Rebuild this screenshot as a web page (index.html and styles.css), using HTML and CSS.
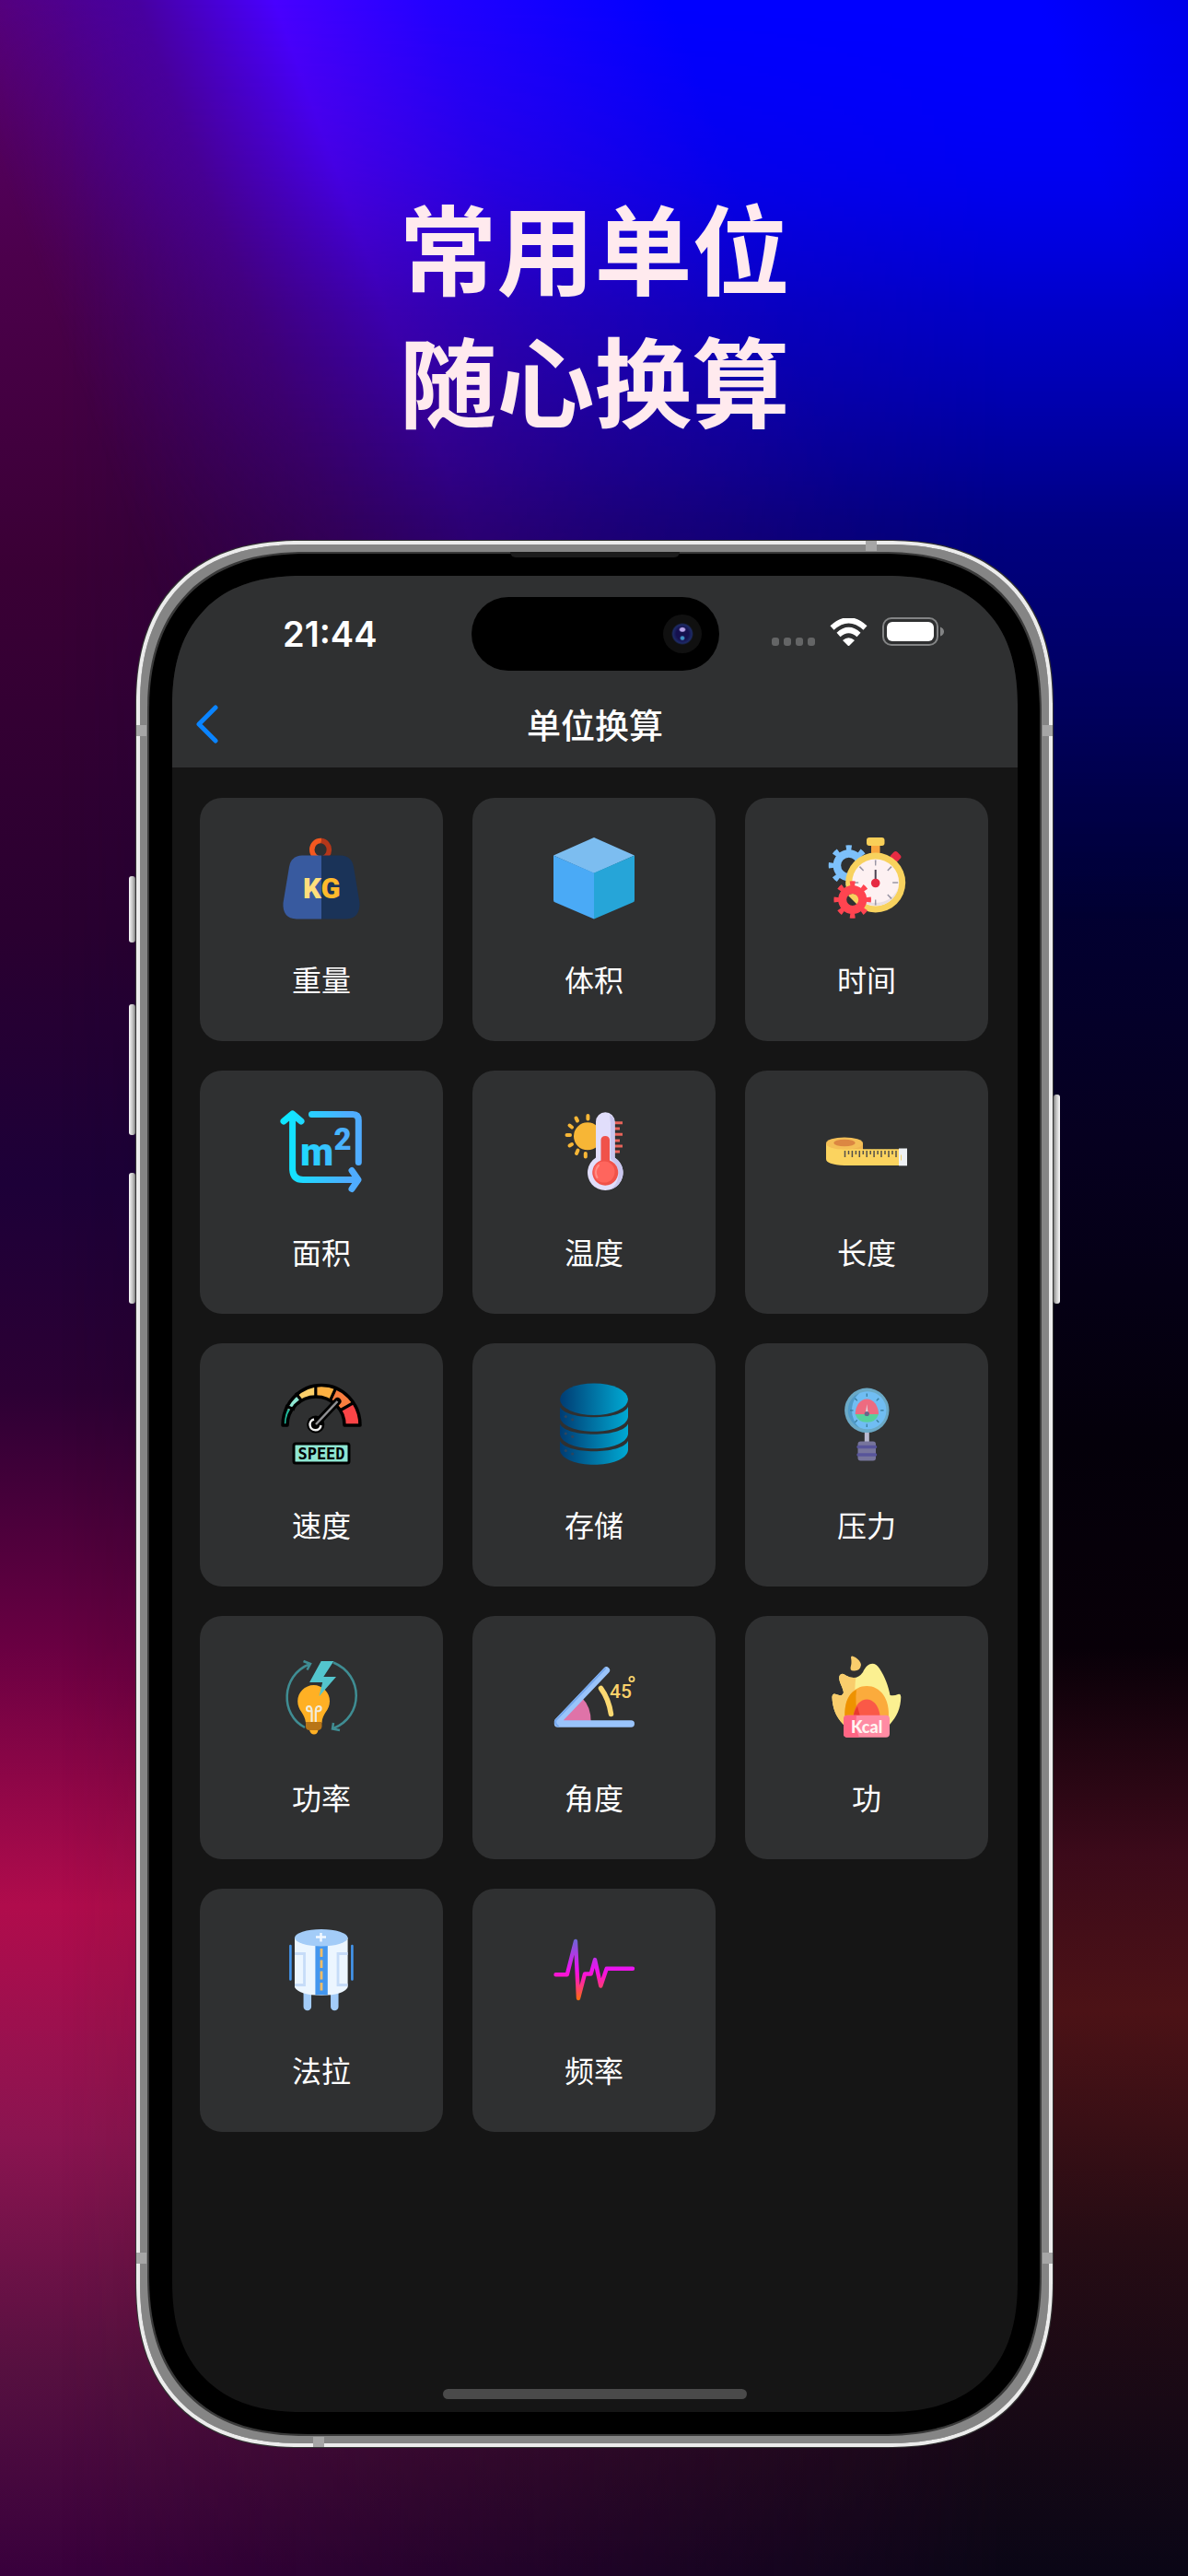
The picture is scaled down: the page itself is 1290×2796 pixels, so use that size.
FILE: index.html
```html
<!DOCTYPE html>
<html lang="zh-CN">
<head>
<meta charset="utf-8">
<meta name="viewport" content="width=device-width, initial-scale=1">
<title>单位换算</title>
<link rel="stylesheet" href="styles.css">
</head>
<body>
<main class="poster">
  <h1 class="headline">常用单位<br>随心换算</h1>

  <div class="phone">
    <span class="key key-action"></span>
    <span class="key key-up"></span>
    <span class="key key-down"></span>
    <span class="key key-power"></span>
    <span class="band band-top"></span>
    <span class="band band-left"></span>
    <span class="band band-right"></span>
    <span class="band band-left-low"></span>
    <span class="band band-right-low"></span>
    <span class="band band-bottom"></span>
    <span class="speaker"></span>

    <div class="screen">
      <header class="top">
        <div class="status">
          <time class="clock">21:44</time>
          <div class="island"><span class="camera"></span></div>
          <div class="signals">
            <svg class="cell" viewBox="0 0 47 30" aria-hidden="true"><g fill="#646566"><rect x="0" y="21" width="8" height="9" rx="3"/><rect x="13" y="21" width="8" height="9" rx="3"/><rect x="26" y="21" width="8" height="9" rx="3"/><rect x="39" y="21" width="8" height="9" rx="3"/></g></svg>
            <svg class="wifi" viewBox="0 0 41 30" aria-hidden="true"><path d="M2.500 10.500Q20.500-6 38.500 10.500" fill="none" stroke="#fff" stroke-width="6"/><path d="M9.500 18Q20.500 8 31.500 18" fill="none" stroke="#fff" stroke-width="6"/><path d="M14 24Q20.500 18.500 27 24L20.500 30.500Z" fill="#fff"/></svg>
            <svg class="battery" viewBox="0 0 68 32" aria-hidden="true"><rect x="1" y="1" width="59" height="29" rx="9" fill="none" stroke="#838485" stroke-width="2"/><rect x="5" y="5" width="51" height="21" rx="6" fill="#fff"/><path d="M63 10.500q4 1.500 4 5t-4 5z" fill="#838485"/></svg>
          </div>
        </div>
        <nav class="nav">
          <button class="back" type="button" aria-label="返回"><svg viewBox="0 0 24 42" aria-hidden="true"><path d="M21 3L3 21L21 39" fill="none" stroke="#0a84ff" stroke-width="5" stroke-linecap="round" stroke-linejoin="round"/></svg></button>
          <h2 class="title">单位换算</h2>
        </nav>
      </header>

      <div class="grid">
        <a class="card" href="#weight">
          <svg class="icon" viewBox="0 0 88 88" aria-hidden="true">
            <path d="M44 3.500A9.300 9.800 0 1 0 44 23" fill="none" stroke="#f4581f" stroke-width="5.500"/>
            <path d="M44 3.500A9.300 9.800 0 0 1 44 23" fill="none" stroke="#b5371a" stroke-width="5.500"/>
            <path d="M44 19.500H23Q11 20 9 32L2.500 71Q1.500 88 17 88.500H44Z" fill="#385a9f"/>
            <path d="M44 19.500H65Q77 20 79 32L85.500 71Q86 88 71 88.500H44Z" fill="#1a3358"/>
            <text class="kg" x="34" y="66" fill="#ffdf7c">K</text><text class="kg" x="54" y="66" fill="#ffb92c">G</text>
          </svg>
          <span>重量</span>
        </a>
        <a class="card" href="#volume">
          <svg class="icon" viewBox="0 0 88 88" aria-hidden="true">
            <path d="M44 0L88 19.500L44 39L0 19.500Z" fill="#7cbdf0"/><path d="M0 19.500L44 38.500V88.500L2 70.500Q0 70 0 68Z" fill="#4aaaf6"/><path d="M88 19.500L44 38.500V88.500L86 70.500Q88 70 88 68Z" fill="#26a5d8"/>
          </svg>
          <span>体积</span>
        </a>
        <a class="card" href="#time">
          <svg class="icon" viewBox="0 0 88 88" aria-hidden="true">
            <g fill="none" stroke="#7dc0fa"><circle cx="24.700" cy="30.300" r="12.800" stroke-width="8.500"/><circle cx="24.700" cy="30.300" r="19" stroke-width="6" pathLength="16" stroke-dasharray=".8 1.2" stroke-dashoffset=".4"/></g>
            <rect x="49" y="5" width="9.500" height="14" fill="#f9a63e"/><rect x="44" y="0" width="19.500" height="9" rx="3" fill="#f8cf58"/>
            <rect x="70.500" y="16" width="10" height="10" rx="3" transform="rotate(45 75.500 21)" fill="#e62b43"/>
            <circle cx="53.700" cy="49" r="32.500" fill="#f8d25e"/><circle cx="53.700" cy="49" r="25.500" fill="#fdf1f2"/>
            <path d="M29 54A25.500 25.500 0 0 0 79 53A26 24 0 0 1 29 54Z" fill="#e8dfe3"/>
            <circle cx="53.700" cy="49" r="21.500" fill="none" stroke="#9a96a5" stroke-width="6" pathLength="136" stroke-dasharray="1.6 15.4" stroke-dashoffset=".8"/>
            <path d="M53.700 35V49" stroke="#4a4150" stroke-width="2"/><circle cx="53.700" cy="49.500" r="4.800" fill="#e62b43"/>
            <circle cx="28.700" cy="67.500" r="7" fill="#303132"/><path d="M24 63A7 7 0 1 1 34 73Z" fill="#f8d25e"/>
            <g fill="none" stroke="#ff4450"><circle cx="28.700" cy="67.500" r="11" stroke-width="9"/><circle cx="28.700" cy="67.500" r="17.500" stroke-width="5.500" pathLength="16" stroke-dasharray=".8 1.2" stroke-dashoffset=".4"/></g>
          </svg>
          <span>时间</span>
        </a>
        <a class="card" href="#area">
          <svg class="icon" viewBox="0 0 88 88" aria-hidden="true">
            <defs><linearGradient id="area-fill" gradientUnits="userSpaceOnUse" x1="8" y1="0" x2="84" y2="0"><stop stop-color="#0fe6ff"/><stop offset=".85" stop-color="#4facff"/></linearGradient></defs>
            <g fill="none" stroke="url(#area-fill)" stroke-width="7" stroke-linecap="round" stroke-linejoin="round"><path d="M3 12L12.600 4L22 12M12.600 5V64Q13 75.500 24 75.500H83M77 65.500L84 75.500L77 85.500"/><path d="M33.500 4.500H78Q84.300 4.500 84.300 11V56.500"/></g>
            <g fill="url(#area-fill)"><text class="metre" x="39" y="59.500">m</text><text class="square" x="67" y="43">2</text></g>
          </svg>
          <span>面积</span>
        </a>
        <a class="card" href="#temperature">
          <svg class="icon" viewBox="0 0 88 88" aria-hidden="true">
            <circle cx="37" cy="28.300" r="15" fill="#f7b636"/>
            <path d="M37.400 6V9.500M24.500 8.500L26 11.500M17.500 16.500L20 18.500M14.500 27H18M17.500 38.500L20 37M25 47L26.500 43.500M34.800 50.500V47" stroke="#f7b636" stroke-width="4" stroke-linecap="round"/>
            <path d="M66 13.700H75M66 20H72M66 26.300H75M66 33H72M66 39H75M66 45H72" stroke="#e8635a" stroke-width="3"/>
            <path d="M46 12.500A10.300 10.300 0 0 1 66.600 12.500V51.500A19.300 19.300 0 1 1 46 51.500Z" fill="#e1defb"/>
            <path d="M61 5Q66.600 8 66.600 14V51.500A19.300 19.300 0 0 1 61 86.500A20 20 0 0 0 62 53V14Z" fill="#c9c6ee"/>
            <path d="M51.500 32A4.800 4.800 0 0 1 61 32V54.500A14 14 0 1 1 51.500 54.500Z" fill="#f0524a"/><circle cx="55" cy="67" r="11.500" fill="#ff655d"/><path d="M47.500 73A11 11 0 0 1 49 60" fill="none" stroke="#ff9088" stroke-width="2" stroke-linecap="round"/>
          </svg>
          <span>温度</span>
        </a>
        <a class="card" href="#length">
          <svg class="icon" viewBox="0 0 88 88" aria-hidden="true">
            <path d="M0 36H40V42.200H79V60H20Q0 59 0 53Z" fill="#fbd35f"/><path d="M0 36H40V42.200H20Q3 42 0 36Z" fill="#efb552"/>
            <ellipse cx="20" cy="36" rx="20" ry="6.600" fill="#f4bf57"/><ellipse cx="20" cy="35.500" rx="11.700" ry="3.800" fill="#dc8742"/>
            <path d="M20.500 44V51M28.400 44V51M36.300 44V51M44.200 44V51M52.100 44V51M60 44V51M68 44V51M76 44V51M24.500 44V48M32.400 44V48M40.300 44V48M48.200 44V48M56.100 44V48M64 44V48M72 44V48" stroke="#54504b" stroke-width="1.500"/>
            <rect x="79" y="41.500" width="9" height="18.800" fill="#eef1f4"/><path d="M81.500 48.500V54.500" stroke="#f0d36b"/>
          </svg>
          <span>长度</span>
        </a>
        <a class="card" href="#speed">
          <svg class="icon" viewBox="0 0 88 88" aria-hidden="true">
            <defs><clipPath id="dial"><path d="M2 46A42 43.500 0 0 1 86 46H69A31 31 0 0 0 7 46Z"/></clipPath></defs>
            <g clip-path="url(#dial)"><path d="M0 0H88V46H0Z" fill="#fb4446"/><path d="M38 46V0H90V14Z" fill="#fb7e3f"/><path d="M46 46V0H61Z" fill="#fdb041"/><path d="M46 46V0H37V20Z" fill="#fdb041"/><path d="M38 46V0H8Z" fill="#fcd06a"/><path d="M38 46L14 4H0V24Z" fill="#8ee6d2"/><path d="M38 46L0 24V46Z" fill="#20b89a"/></g>
            <path d="M2 46A42 43.500 0 0 1 86 46H69A31 31 0 0 0 7 46Z" fill="none" stroke="#000" stroke-width="3.500" stroke-linejoin="round"/>
            <path d="M5 25L15 29M16 11L23 20M37.800 2V15M60 5L54 18M78 22L64 30" stroke="#000" stroke-width="3.200"/>
            <path d="M37.800 45L61.500 20" stroke="#000" stroke-width="8" stroke-linecap="round"/><circle cx="37.800" cy="45" r="9.600" fill="#000"/><path d="M36 39.500A6 6 0 1 0 43.500 46" fill="none" stroke="#eee" stroke-width="2.500"/><path d="M38 45L61.500 20" stroke="#8f8f92" stroke-width="2.500"/>
            <rect x="14" y="66" width="60" height="21" rx="2" fill="#8ee6d2" stroke="#000" stroke-width="3"/>
            <text class="speed" x="44" y="83">SPEED</text>
          </svg>
          <span>速度</span>
        </a>
        <a class="card" href="#storage">
          <svg class="icon" viewBox="0 0 88 88" aria-hidden="true">
            <defs><linearGradient id="disk-fill" gradientUnits="userSpaceOnUse" x1="7" y1="0" x2="81" y2="0"><stop stop-color="#003c73"/><stop offset="1" stop-color="#00a9d3"/></linearGradient></defs>
            <g fill="url(#disk-fill)"><ellipse cx="44" cy="17.800" rx="37" ry="17.300"/><path d="M7 26C14 41 74 41 81 26V37C78 58 10 58 7 37Z"/><path d="M7 44.500C14 59.500 74 59.500 81 44.500V55.500C78 76.500 10 76.500 7 55.500Z"/><path d="M7 63C14 78 74 78 81 63V73C78 94 10 94 7 73Z"/></g>
            <g fill="#2b4660"><circle cx="13.300" cy="36.500" r="1.600"/><circle cx="20.700" cy="39.800" r="1.600"/><circle cx="13.300" cy="55" r="1.600"/><circle cx="20.700" cy="58.300" r="1.600"/><circle cx="13.300" cy="73.500" r="1.600"/><circle cx="20.700" cy="77" r="1.600"/></g>
          </svg>
          <span>存储</span>
        </a>
        <a class="card" href="#pressure">
          <svg class="icon" viewBox="0 0 88 88" aria-hidden="true">
            <rect x="41.800" y="52" width="5" height="13" fill="#b9b9cf"/><rect x="34.500" y="63.500" width="19.500" height="21" rx="3" fill="#77759c"/><path d="M35 69.600H53.500M35 78H53.500" stroke="#58559a" stroke-width="3.500" stroke-linecap="round"/>
            <circle cx="44.300" cy="29.800" r="24.200" fill="#6ba9c6"/><circle cx="45" cy="29.800" r="20.500" fill="#70bdf3"/><path d="M36 11A20.500 20.500 0 0 0 36 48.500A26 26 0 0 1 36 11Z" fill="#519bc8"/>
            <circle cx="44.300" cy="29.800" r="16.500" fill="none" stroke="#3c7f9f" stroke-width="3.500" pathLength="104" stroke-dasharray="1.400 11.600" stroke-dashoffset=".7"/>
            <path d="M31.700 34A12.600 16.500 0 0 1 57 34Z" fill="#ed6b80"/><path d="M31.700 34H57Q54 42.800 44.300 42.800T31.700 34Z" fill="#58cf9c"/><path d="M42.800 34L44.300 23L45.800 34Z" fill="#ddd3dc"/><circle cx="44.300" cy="33.500" r="2.600" fill="#69668c"/>
          </svg>
          <span>压力</span>
        </a>
        <a class="card" href="#power">
          <svg class="icon" viewBox="0 0 88 88" aria-hidden="true">
            <path d="M30.500 9.500C0 22-1 64 26 78M57 7.500C90 21 90 66 57 79M24.500 6L32 9L28.500 15.500M57 73L56 79.500L64 81" fill="none" stroke="#3f8d93" stroke-width="2.500"/>
            <path d="M27 73C26 62 18.200 60 18.200 49.500A17.400 17.400 0 0 1 53 49.500C53 60 45 62 44.500 73Z" fill="#ffb024"/>
            <path d="M27 72H44.500V77Q44 81 40 81H31.500Q27 81 27 77Z" fill="#b87517"/><path d="M31 81H40.500Q39.500 85.500 36 85.500T31 81Z" fill="#ffb024"/>
            <path d="M33.500 72V60Q33 55 30.500 55T28 58T33.500 60M37.800 72V60Q38 55 41 55T43.500 58T37.800 60" fill="none" stroke="#f1ecdc" stroke-width="2.200"/>
            <path d="M43.700 6H57.400L46.300 23H60L41.500 44.300L45.200 29H31.100Z" fill="#53c5cd"/>
          </svg>
          <span>功率</span>
        </a>
        <a class="card" href="#angle">
          <svg class="icon" viewBox="0 0 88 88" aria-hidden="true">
            <path d="M5 71L31 46Q40.700 55 40.700 72H5Z" fill="#df73a8"/>
            <path d="M57.400 16L4.500 71.500V74H84.300" fill="none" stroke="#9ac4fb" stroke-width="7.400" stroke-linecap="round" stroke-linejoin="round"/><path d="M56 14L2.500 70Q1 74 5 76.500" fill="none" stroke="#76a8ee" stroke-width="2" stroke-linecap="round"/>
            <path d="M51.500 35.500Q60 47 62.500 63.500" fill="none" stroke="#fbd972" stroke-width="5.500" stroke-linecap="round"/>
            <text class="degrees" x="73" y="45.500">45</text><circle cx="85" cy="25.500" r="2.600" fill="none" stroke="#fbd26a" stroke-width="1.800"/>
          </svg>
          <span>角度</span>
        </a>
        <a class="card" href="#work">
          <svg class="icon" viewBox="0 0 88 88" aria-hidden="true">
            <defs><clipPath id="left-half"><path d="M0 0H38Q28 30 33 55L38 90H0Z"/></clipPath></defs>
            <path d="M19 75C10 66 7 56 6.500 45Q7 40 11 42Q18 45 19 40C18 33 13 28 14.500 22Q17 18 21.500 21.500Q33 28 40 18C45 7 53 6 58 14C64 23 68 34 69.500 43Q74 44 78 42Q81 40.500 81.300 45C81 57 77 66 69 75Z" fill="#fbf091"/>
            <g clip-path="url(#left-half)"><path d="M19 75C10 66 7 56 6.500 45Q7 40 11 42Q18 45 19 40C18 33 13 28 14.500 22Q17 18 21.500 21.500Q33 28 40 18V75Z" fill="#f9cd6c"/></g>
            <path d="M27 2Q27-1 32 2T38 10Q37 17 30 16.500Q25 16.500 27 11Q28 8 27 2Z" fill="#f9cd6c"/>
            <path d="M20.700 70C18 46 30 33 44.200 33S70 46 67.700 70Z" fill="#fbab3c"/><path d="M20.700 70C19 49 26 40 33 37Q31 50 35 70Z" fill="#ee9200"/>
            <path d="M29.500 66C31 53 38 47.600 44.200 47.600S57 53 58.800 66Z" fill="#fa5947"/><path d="M29.500 66Q31 59 34 55L37 66Z" fill="#e8392e"/>
            <rect x="19" y="64.800" width="50" height="24" rx="4" fill="#ff8ba3"/><path d="M33 64.800H23Q19 64.800 19 69V85Q19 88.800 23 88.800H36Q31 78 33 64.800Z" fill="#ff6584"/>
            <text class="kcal" x="44.200" y="83.500">Kcal</text>
          </svg>
          <span>功</span>
        </a>
        <a class="card" href="#farad">
          <svg class="icon" viewBox="0 0 88 88" aria-hidden="true">
            <path d="M28.800 68V85M58.300 68V85" stroke="#a3ccf8" stroke-width="8.500" stroke-linecap="round"/>
            <path d="M15 10H72.600V64Q68 72.700 44 72.700T15 64Z" fill="#ecf6ff"/>
            <path d="M15 27.500H25.500V61.500H15M72.600 27.500H62V61.500H72.600" fill="none" stroke="#c6dcf8" stroke-width="2.800"/>
            <path d="M37.400 14H50.800V72.300H37.400Z" fill="#4396ee"/><path d="M44 22V31M44 34.500V43M44 46.500V55.500M44 59V67.500" stroke="#efbd68" stroke-width="2.800"/>
            <ellipse cx="43.800" cy="10.200" rx="28.800" ry="9.200" fill="#a3ccf8"/><path d="M38 9.500H49M43.500 5V14.500" stroke="#f2f8ff" stroke-width="2.500"/>
            <path d="M10.400 19V55.500M77.400 19V55.500" stroke="#4396ee" stroke-width="2.600" stroke-linecap="round"/>
          </svg>
          <span>法拉</span>
        </a>
        <a class="card" href="#frequency">
          <svg class="icon" viewBox="0 0 88 88" aria-hidden="true">
            <defs><linearGradient id="pulse" gradientUnits="userSpaceOnUse" x1="0" y1="12" x2="0" y2="77"><stop stop-color="#6b66d6"/><stop offset=".5" stop-color="#ee12f0"/><stop offset=".62" stop-color="#fb16c8"/><stop offset="1" stop-color="#ff6a12"/></linearGradient></defs>
            <path d="M2.500 50.300H14.800L24 14L27 76L34 49.500H40.700L45 34L51.300 62.500L57.700 43.700H86" fill="none" stroke="url(#pulse)" stroke-width="4.400" stroke-linecap="round" stroke-linejoin="round"/>
          </svg>
          <span>频率</span>
        </a>
      </div>
      <span class="home-bar"></span>
    </div>
  </div>
</main>
</body>
</html>
```
FILE: styles.css
```css
* { box-sizing: border-box; }

body {
  margin: 0;
  background: #0b0016;
  font-family: "Noto Sans CJK SC", sans-serif;
}

.poster {
  position: relative;
  isolation: isolate;
  min-height: 100vh;
  padding: 194px 48px 140px 49px;
  overflow: hidden;
  background: linear-gradient(to bottom,
    #5a0070 0%, #4c004c 10%, #3a0035 22%, #2a0030 36%, #1d0038 46%,
    #2c0034 54%, #6a0042 64%, #b00c4c 74%, #8a1450 83%, #561040 92%, #38003c 100%);
}

/* right-hand side of the backdrop, blended across the width */
.poster::before {
  content: "";
  position: absolute;
  inset: 0;
  z-index: -2;
  background: linear-gradient(to bottom,
    #0000ff 0%, #0000a8 9%, #000058 20%, #00003a 31%, #060020 44%,
    #04000a 56%, #080008 64%, #3c0a1a 72%, #4c1216 78%, #260c14 87%, #0a0616 100%);
  -webkit-mask-image: linear-gradient(to right, transparent 5%, #000 85%);
  mask-image: linear-gradient(to right, transparent 5%, #000 85%);
}

/* slanted violet and blue light at the top */
.poster::after {
  content: "";
  position: absolute;
  inset: 0 0 auto;
  height: 1000px;
  z-index: -1;
  background: linear-gradient(70deg,
    rgba(70, 0, 60, 0) 18%, #4800a0 31%, #4800ff 40%, #2400ff 50%, #0000ff 66%, #0000ff 90%, #0000e8 100%);
  -webkit-mask-image: linear-gradient(to bottom, #000 0%, rgba(0, 0, 0, .8) 18%, rgba(0, 0, 0, .5) 34%, rgba(0, 0, 0, .25) 58%, transparent 100%);
  mask-image: linear-gradient(to bottom, #000 0%, rgba(0, 0, 0, .8) 18%, rgba(0, 0, 0, .5) 34%, rgba(0, 0, 0, .25) 58%, transparent 100%);
}

.headline {
  margin: 0 0 105px;
  color: #ffeaee;
  font-family: "Kaiti SC", STKaiti, KaiTi, "Noto Sans CJK SC", sans-serif;
  font-size: 106px;
  font-weight: 700;
  line-height: 144px;
  text-align: center;
}

.phone {
  position: relative;
  max-width: 995px;
  margin: 0 auto;
  padding: 34px 34px 34px 35px;
  border: 4px solid #ececec;
  border-radius: 160px;
  background: #000;
  box-shadow: inset 0 0 0 8px #858585, inset 0 0 0 10px #3a3a3a, 0 0 0 1px #333;
}

.key {
  position: absolute;
  width: 7px;
  border-radius: 3px;
  background: linear-gradient(to right, #fafafa, #b4b4b4 70%, #777);
}
.key-action { left: -12px; top: 360px; height: 72px; }
.key-up { left: -12px; top: 499px; height: 142px; }
.key-down { left: -12px; top: 682px; height: 142px; }
.key-power { right: -12px; top: 597px; height: 227px; transform: scaleX(-1); }

.band { position: absolute; background: #a6a6a6; }
.band-top { right: 187px; top: -4px; width: 12px; height: 11px; }
.band-bottom { left: 188px; bottom: -4px; width: 12px; height: 11px; }
.band-left, .band-left-low { left: -4px; width: 11px; height: 12px; }
.band-right, .band-right-low { right: -4px; width: 11px; height: 12px; }
.band-left, .band-right { top: 196px; }
.band-left-low, .band-right-low { bottom: 195px; }

.speaker {
  position: absolute;
  top: 8px;
  left: 50%;
  width: 184px;
  height: 6px;
  margin-left: -92px;
  border-radius: 0 0 6px 6px;
  background: #1c1c1c;
}

.screen {
  display: flex;
  flex-direction: column;
  min-height: 1993px;
  overflow: hidden;
  border-radius: 122px;
  background: #151515;
  color: #fff;
}

/* continuous corner curve where the browser can draw it */
@supports (corner-shape: superellipse(1.25)) {
  .phone { border-radius: 180px; corner-shape: superellipse(1.25); }
  .screen { border-radius: 142px; corner-shape: superellipse(1.25); }
}

.top { background: #2f3031; }

.status {
  display: grid;
  grid-template-columns: 1fr 269px 1fr;
  align-items: center;
  padding: 23px 0 15px;
}
.clock {
  padding-left: 120px;
  font-family: Inter, sans-serif;
  font-size: 38px;
  font-weight: 600;
  line-height: 48px;
}
.island {
  display: flex;
  align-items: center;
  justify-content: flex-end;
  height: 80px;
  padding-right: 19px;
  border-radius: 40px;
  background: #000;
}
.camera {
  width: 42px;
  height: 42px;
  border-radius: 50%;
  background:
    radial-gradient(ellipse 4px 3px at 50% 39%, #b9a6ea 60%, transparent),
    radial-gradient(circle 3px at 50% 61%, #3f93c8 50%, transparent),
    radial-gradient(circle 12px at 50% 50%, #15104e 55%, #1d2b66 85%, transparent),
    #101010;
}
.signals {
  display: flex;
  align-items: center;
  justify-content: flex-end;
  gap: 16px;
  padding: 0 79px 4px 0;
}
.cell { width: 47px; height: 30px; }
.wifi { width: 41px; height: 30px; }
.battery { width: 68px; height: 32px; }

.nav {
  display: grid;
  grid-template-columns: 1fr auto 1fr;
  align-items: center;
  height: 90px;
  padding-bottom: 4px;
}
.back {
  width: 24px;
  height: 42px;
  margin-left: 26px;
  padding: 0;
  border: 0;
  background: none;
}
.back svg { display: block; width: 24px; height: 42px; }
.title {
  margin: 0;
  font-size: 37px;
  font-weight: 500;
  line-height: 54px;
}

.grid {
  display: grid;
  grid-template-columns: repeat(3, 1fr);
  gap: 32px;
  padding: 33px 32px 33px 30px;
}
.card {
  display: flex;
  flex-direction: column;
  align-items: center;
  gap: 43px;
  height: 264px;
  padding-top: 43px;
  border-radius: 24px;
  background: #2f3031;
  color: #fff;
  font-size: 32px;
  line-height: 44px;
  text-decoration: none;
}
.icon { width: 88px; height: 88px; overflow: visible; }
.icon text { text-anchor: middle; font-family: Roboto, sans-serif; }
.icon .kg { font-size: 31px; font-weight: 900; }
.icon .metre { font-size: 42px; font-weight: 900; }
.icon .square { font-size: 33px; font-weight: 900; }
.icon .speed { font-family: "DejaVu Sans Mono", monospace; font-size: 17px; font-weight: 700; }
.icon .degrees { font-size: 21px; font-weight: 500; fill: #fbd26a; }
.icon .kcal { font-family: Lato, sans-serif; font-size: 18px; font-weight: 900; fill: #fff5f2; }

.home-bar {
  width: 330px;
  height: 11px;
  margin: auto auto 14px;
  border-radius: 6px;
  background: #4a4a4a;
}
```
